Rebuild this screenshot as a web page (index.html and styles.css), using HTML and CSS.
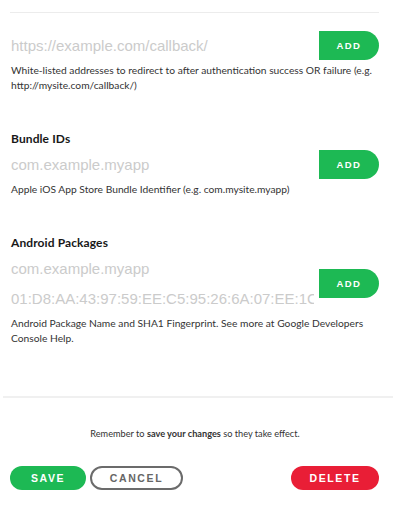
FILE: index.html
```html
<!DOCTYPE html>
<html>
<head>
<meta charset="utf-8">
<link rel="stylesheet" href="styles.css">
</head>
<body>
<div class="page">
  <div class="rule"></div>

  <div class="field first">
    <div class="group">
      <div class="inputs">
        <input class="input" type="text" placeholder="https://example.com/callback/">
      </div>
      <button class="add">ADD</button>
    </div>
    <p class="desc">White-listed addresses to redirect to after authentication success OR failure (e.g. http://mysite.com/callback/)</p>
  </div>

  <div class="field">
    <h3 class="label">Bundle IDs</h3>
    <div class="group">
      <div class="inputs">
        <input class="input" type="text" placeholder="com.example.myapp">
      </div>
      <button class="add">ADD</button>
    </div>
    <p class="desc">Apple iOS App Store Bundle Identifier (e.g. com.mysite.myapp)</p>
  </div>

  <div class="field">
    <h3 class="label">Android Packages</h3>
    <div class="group">
      <div class="inputs">
        <input class="input" type="text" placeholder="com.example.myapp">
        <input class="input" type="text" placeholder="01:D8:AA:43:97:59:EE:C5:95:26:6A:07:EE:1C:47:D5:3E:2C:45:AD">
      </div>
      <button class="add">ADD</button>
    </div>
    <p class="desc">Android Package Name and SHA1 Fingerprint. See more at Google Developers Console Help.</p>
  </div>

  <div class="divider"></div>

  <p class="remember">Remember to <strong>save your changes</strong> so they take effect.</p>

  <div class="actions">
    <button class="btn save">SAVE</button>
    <button class="btn cancel">CANCEL</button>
    <span class="spacer"></span>
    <button class="btn delete">DELETE</button>
  </div>
</div>
</body>
</html>
```

FILE: styles.css
```css
* { box-sizing: border-box; }
html, body { margin: 0; padding: 0; background: #fff; }
body { font-family: "Lato", "Liberation Sans", sans-serif; color: #333; }

.page {
  width: 368px;
  margin-left: 11px;
}

.rule {
  height: 1px;
  background: #ececec;
  margin: 12px 0 0 -1px;
}

.field { margin-top: 38px; }
.field.first { margin-top: 17px; }

.label {
  margin: 0;
  font-size: 12px;
  line-height: 16px;
  font-weight: 700;
  color: #181818;
  letter-spacing: 0.1px;
}

.group {
  display: flex;
  align-items: center;
  margin-top: 2px;
}
.field.first .group { margin-top: 0; }

.inputs {
  flex: 1;
  display: flex;
  flex-direction: column;
  min-width: 0;
  margin-right: 5px;
}

.input {
  border: 0;
  outline: 0;
  padding: 0;
  margin: 0;
  height: 30px;
  width: 100%;
  background: transparent;
  font-family: "Liberation Sans", Arial, sans-serif;
  font-size: 15px;
  color: #333;
}
.input::placeholder { color: #cbcbcb; }

.add {
  flex: none;
  width: 60px;
  height: 29px;
  border: 0;
  border-radius: 0 15px 15px 0;
  background: #1db954;
  color: #fff;
  font-family: "Liberation Sans", Arial, sans-serif;
  font-weight: 700;
  font-size: 9.5px;
  letter-spacing: 1.4px;
  padding: 0;
}

.desc {
  margin: 3px 0 0;
  font-size: 10.25px;
  line-height: 15px;
  color: #333;
}

.divider {
  height: 2px;
  background: #f0f0f0;
  margin: 50px -14px 0 -8px;
}

.remember {
  margin: 28px 0 0;
  text-align: center;
  font-size: 9.2px;
  line-height: 15px;
  color: #333;
}
.remember strong { font-weight: 700; }

.actions {
  display: flex;
  align-items: center;
  gap: 4px;
  margin-top: 25px;
  margin-left: -1px;
}
.spacer { flex: 1; }

.btn {
  height: 24px;
  border-radius: 12px;
  border: 0;
  padding: 0;
  font-family: "Liberation Sans", Arial, sans-serif;
  font-weight: 700;
  font-size: 10.5px;
  letter-spacing: 1.6px;
  color: #fff;
}
.save { width: 76px; background: #1db954; }
.cancel {
  width: 93px;
  background: #fff;
  border: 2px solid #6b6b6b;
  color: #666;
}
.delete { width: 88px; background: #e91e36; }
```
